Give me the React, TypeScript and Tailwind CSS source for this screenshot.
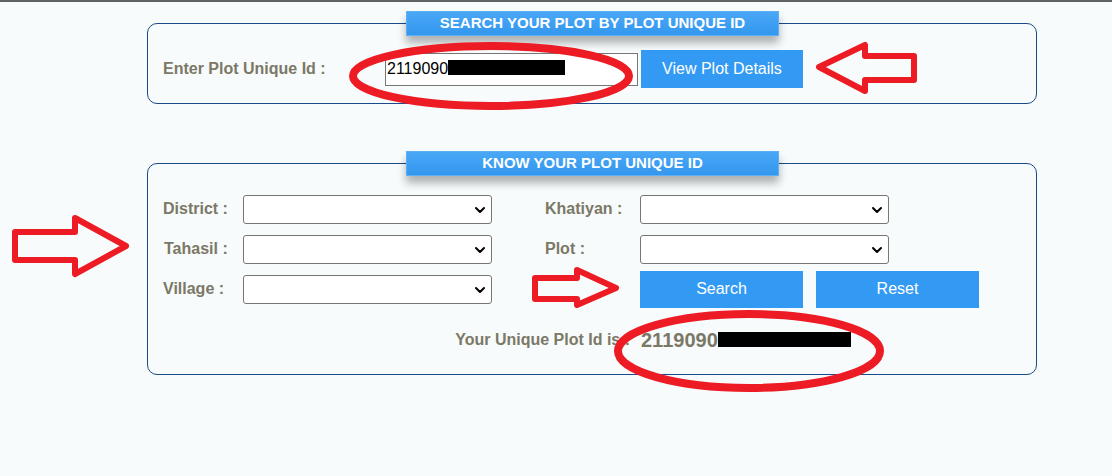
import React from 'react';
import { ChevronDown } from 'lucide-react';

const labelCls = "text-[16px] font-bold text-[#7b7867] whitespace-nowrap";
const btnCls = "h-[37px] w-[163px] bg-[#339af4] text-white text-[16px]";

function Legend({ children }: { children: React.ReactNode }) {
  return (
    <div className="absolute left-[258px] -top-[13px] w-[373px] h-[25px] flex items-center justify-center bg-gradient-to-b from-[#4aa7f6] to-[#3297ee] border border-[#5db0f6] shadow-[0_7px_8px_rgba(0,0,0,0.3)] text-white text-[15px] font-bold">
      {children}
    </div>
  );
}

function Select() {
  return (
    <div className="relative w-[249px] h-[29px]">
      <select className="appearance-none w-full h-full border border-[#767676] rounded-[3px] bg-white text-[14px] text-black" />
      <ChevronDown
        className="absolute right-[4px] top-[7px] pointer-events-none text-black"
        size={16}
        strokeWidth={3}
      />
    </div>
  );
}

function Annotations() {
  const red = "#ed1c24";
  return (
    <svg className="absolute inset-0 pointer-events-none" width="1112" height="476" viewBox="0 0 1112 476">
      {/* redactions */}
      <rect x="448" y="60" width="117" height="15" fill="#000" />
      <rect x="718" y="332" width="133" height="15" fill="#000" />
      <g fill="none" stroke={red} strokeWidth="8" strokeLinejoin="round">
        <ellipse cx="491" cy="76" rx="138" ry="30" />
        <ellipse cx="749" cy="351" rx="131" ry="37" />
        {/* left arrow on the top box */}
        <polygon points="819,67 865,45 865,56 914,56 914,80 865,80 865,91" strokeWidth="6" />
        {/* big arrow at the left */}
        <polygon points="15,232 75,232 75,218 126,246 75,274 75,260 15,260" strokeWidth="6" />
        {/* arrow to the search button */}
        <polygon points="535,278 577,278 577,270 616,288 577,305 577,299 535,299" strokeWidth="6" />
      </g>
    </svg>
  );
}

export default function App() {
  return (
    <div className="relative w-[1112px] h-[476px] overflow-hidden bg-[#f7fbfb] font-['Liberation_Sans',Arial,sans-serif]">
      <div className="h-[2px] bg-[#5f6563]" />
      <div className="ml-[147px] w-[890px] pt-[21px]">
        {/* search by id */}
        <div className="relative border border-[#1b4a8a] rounded-[10px] pt-[26px] pb-[15px] px-[15px]">
          <Legend>SEARCH YOUR PLOT BY PLOT UNIQUE ID</Legend>
          <div className="flex items-center">
            <span className={`${labelCls} w-[222px]`}>Enter Plot Unique Id :</span>
            <input
              className="w-[253px] h-[33px] border border-[#767676] bg-white px-[1px] text-[16px] text-black outline-none"
              defaultValue="2119090"
            />
            <button className="ml-[3px] w-[162px] h-[38px] bg-[#339af4] text-white text-[16px]">View Plot Details</button>
          </div>
        </div>

        {/* know your id */}
        <div className="relative mt-[59px] border border-[#1b4a8a] rounded-[10px] pt-[25px] pb-[14px] px-[15px]">
          <Legend>KNOW YOUR PLOT UNIQUE ID</Legend>
          <div className="flex items-center h-[40px]">
            <span className={`${labelCls} w-[80px]`}>District :</span>
            <Select />
            <span className={`${labelCls} ml-[53px] w-[95px]`}>Khatiyan :</span>
            <Select />
          </div>
          <div className="flex items-center h-[40px]">
            <span className={`${labelCls} w-[80px] pl-[1px]`}>Tahasil :</span>
            <Select />
            <span className={`${labelCls} ml-[53px] w-[95px]`}>Plot :</span>
            <Select />
          </div>
          <div className="flex items-center h-[40px]">
            <span className={`${labelCls} w-[80px]`}>Village :</span>
            <Select />
            <span className="ml-[53px] w-[95px]" />
            <button className={btnCls}>Search</button>
            <button className={`${btnCls} ml-[13px]`}>Reset</button>
          </div>
          <div className="mt-[11px] h-[40px] flex items-center">
            <span className={`${labelCls} w-[467px] text-right`}>Your Unique Plot Id is :</span>
            <span className="ml-[11px] text-[20px] font-bold text-[#7b7867]">211909090</span>
          </div>
        </div>
      </div>
      <Annotations />
    </div>
  );
}
